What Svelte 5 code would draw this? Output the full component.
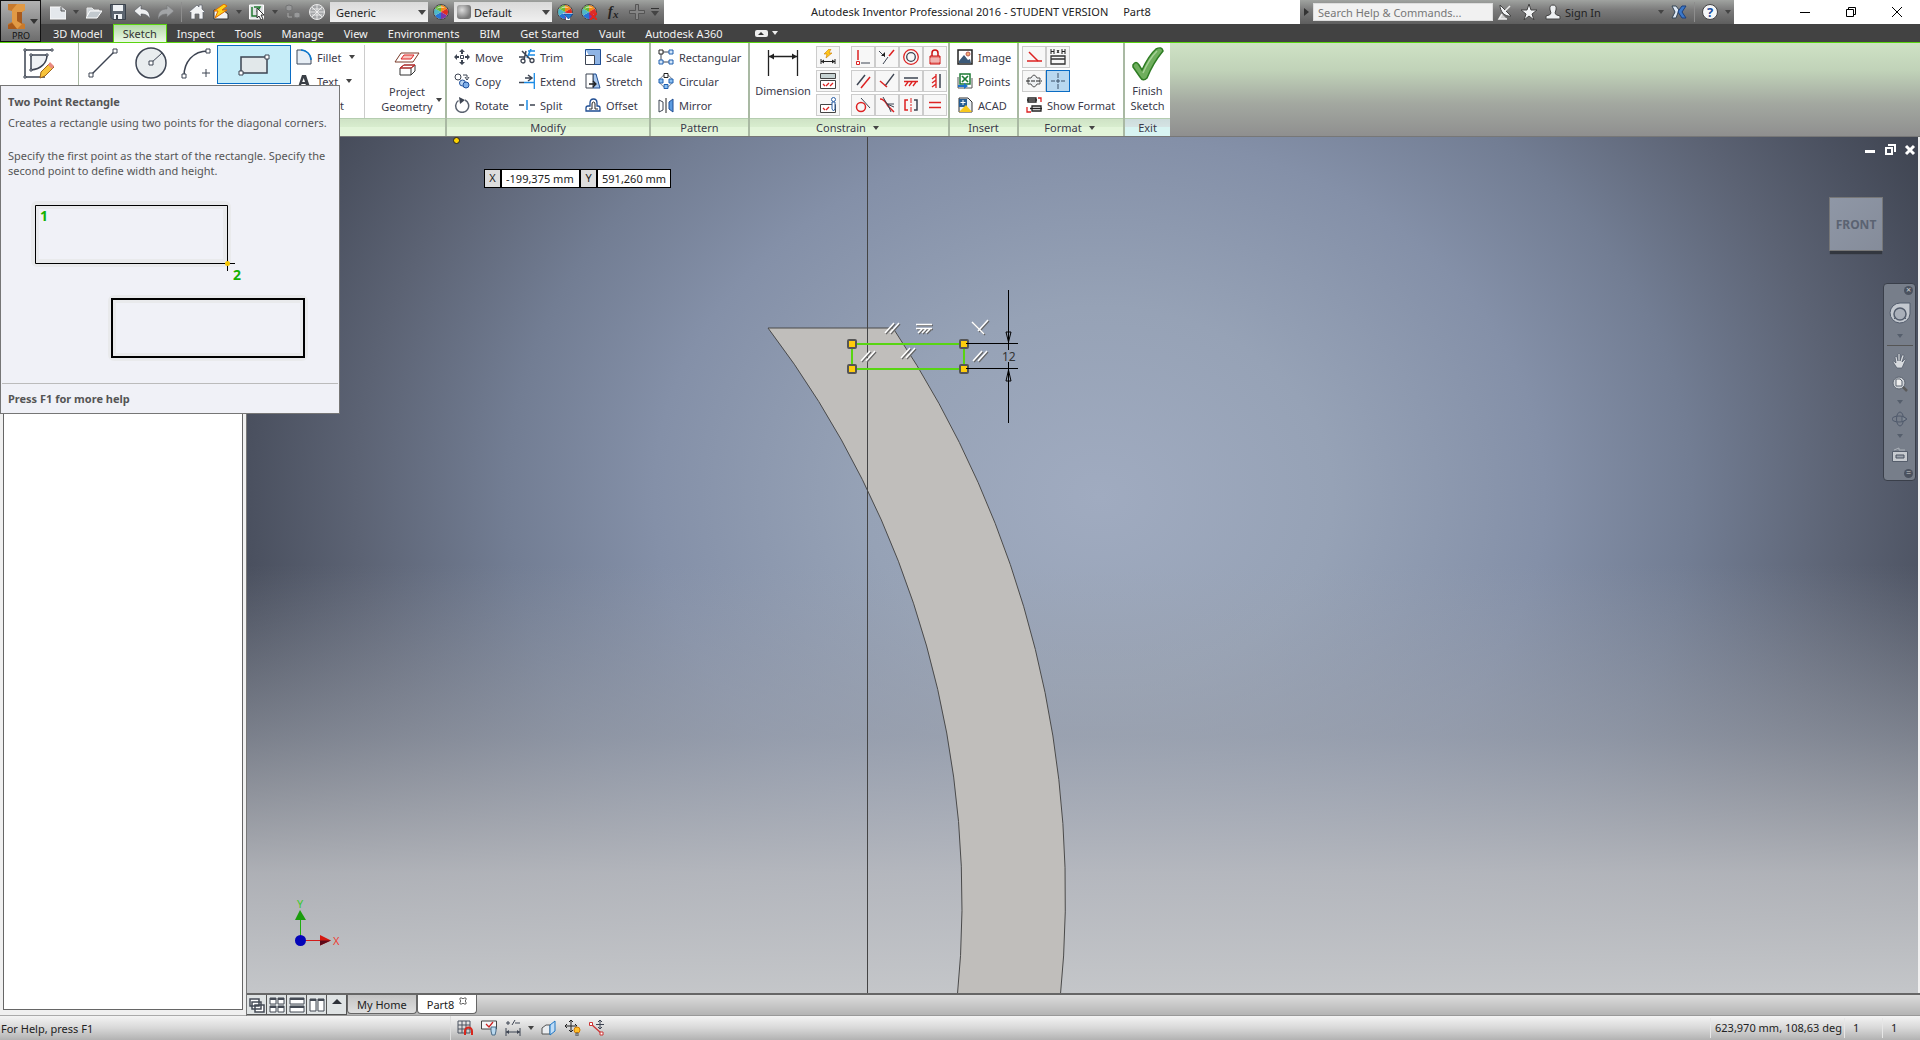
<script lang="ts">
	type Tool = { label: string; icon: string; menu?: boolean };

	// Inner SVG markup, all on a 16x16 view box
	const icons: Record<string, string> = {
		newFile: '<path d="M0 3h11l5 4v8H0z" fill="#e4e8ec" stroke="#fafafa"/><path d="M11 3v4h4" fill="#b9c0c6" stroke="#555"/>',
		open: '<path d="M1 12V4h5l2 2h5v2" fill="#d0d6da" stroke="#e8e8e8"/><path d="M0 14l4-7h12l-5 7z" fill="#c2c9ce" stroke="#fff"/>',
		save: '<path d="M0.500.500h15v15H3l-2-2z" fill="#5c6570" stroke="#39414b"/><path d="M3 1h10v6H3zM4 10h8v5H4z" fill="#eef1f4"/><path d="M6 11h2v4H6z" fill="#39414b"/>',
		undo: '<path d="M0 7l7-6v4c5 0 9 2 9 10-2-4-5-5-9-5v3z" fill="#eef0f2" stroke="#51565c" stroke-width=".6"/>',
		redo: '<path d="M16 7L9 1v4C4 5 0 7 0 15c2-4 5-5 9-5v3z" fill="#a2a4a6" stroke="#77797b" stroke-width=".6"/>',
		home: '<path d="M0 8l8-7 2 2V1h3v4l3 3-1 1-1-1v7h-4v-5H6v5H2V8L1 9z" fill="#f0f2f4" stroke="#5a6068" stroke-width=".7"/>',
		bolt: '<path d="M1 6h9l5 4v5H1z" fill="#f2f2f2" stroke="#333"/><path d="M11 0L1 7h4l-3 7 12-8H9l5-4z" fill="#ffd21a" stroke="#e06a00"/>',
		pick: '<path d="M0.500 1h14v14h-14z" fill="#dfe3e4" stroke="#fff"/><path d="M3 3v9h5M5 3h6l-3 5" fill="none" stroke="#237a31" stroke-width="1.500"/><path d="M8 4v10l2-2 2 4 2-1-2-4h3z" fill="#fff" stroke="#333"/>',
		cubes: '<g fill="#98999a" stroke="#737475"><path d="M1 2l3-1 3 1v4L4 7 1 6zM9 9l3-1 3 1v4l-3 1-3-1z"/><path d="M3 9v4h4" fill="none" stroke="#a8a8a8"/></g>',
		globe: '<circle cx="8" cy="8" r="7.500" fill="#a4a6a8" stroke="#eee"/><path d="M8 1v14M1 8h14M3 3l10 10M13 3L3 13M3 5h10M3 11h10" stroke="#f4f4f4" fill="none" stroke-width=".8"/>',
		wheel: '<circle cx="8" cy="8" r="7.500" fill="#eee"/><path d="M8 8V1a7 7 0 0 1 6 3.500z" fill="#f28a18"/><path d="M8 8l6-3.500a7 7 0 0 1 0 7z" fill="#e02c25"/><path d="M8 8l6 3.500A7 7 0 0 1 8 15z" fill="#7c36a8"/><path d="M8 8v7a7 7 0 0 1-6-3.500z" fill="#2774d6"/><path d="M8 8l-6 3.500a7 7 0 0 1 0-7z" fill="#4db8c8"/><path d="M8 8L2 4.500A7 7 0 0 1 8 1z" fill="#67b836"/><circle cx="8" cy="8" r="7.500" fill="none" stroke="#444"/><path d="M3 5q4-5 9-1-5-1-9 1z" fill="#fff" opacity=".6"/>',
		fx: '<text x="3" y="12" font-family="Liberation Serif, serif" font-style="italic" font-weight="bold" font-size="14" fill="#222">f</text><text x="8" y="14" font-family="Liberation Serif, serif" font-style="italic" font-weight="bold" font-size="11" fill="#222">x</text>',
		plus: '<path d="M6.500.500h3v6h6v3h-6v6h-3v-6h-6v-3h6z" fill="#858585" stroke="#555"/>',
		fillet: '<path d="M1 15V1h5c5 1 8 4 9 9v5z" fill="#e7eef5" stroke="#3a4658"/><path d="M5 1c5 0 10 4 10 10" fill="none" stroke="#0b78d0" stroke-width="1.500"/>',
		text: '<path d="M6 2h4l4 12h2v1H9v-1h1.500l-1-3h-4l-1 3H6v1H1v-1h1zM6.200 9h2.800L7.700 5z" fill="#3b3f46"/>',
		point: '<path d="M8 2v12M2 8h12" stroke="#3a4658"/>',
		move: '<path d="M8 0l3 3H9v2H7V3H5zM8 16l3-3H9v-2H7v2H5zM0 8l3-3v2h2v2H3v2zM16 8l-3-3v2h-2v2h2v2z" fill="#3d4452"/><path d="M6.500 6.500h3v3h-3z" fill="#fff" stroke="#3d4452"/>',
		copy: '<circle cx="4" cy="4" r="3" fill="#fff" stroke="#3d4452"/><circle cx="8.500" cy="10" r="3" fill="#b9d5f4" stroke="#1e4f9c"/><circle cx="12" cy="12" r="3" fill="#7fb0ea" stroke="#1e4f9c"/><path d="M9 2h4v3m-2-1l2 3 2-3" fill="none" stroke="#3d4452"/>',
		rotate: '<path d="M4.500 3.500A6.500 6.500 0 1 0 11 3" fill="none" stroke="#5a6270" stroke-width="1.500"/><path d="M5 0l6 3-5 4z" fill="#3d4452"/>',
		trim: '<path d="M9 2h7M9 6h7M12 0L8 9" stroke="#1a8be6" stroke-width="1.500"/><path d="M0 8h5M3 2l8 8M7 2L5 11" stroke="#3d4452" stroke-width="1.500"/><circle cx="4" cy="12" r="2" fill="none" stroke="#3d4452" stroke-width="1.300"/><circle cx="13" cy="11.500" r="2" fill="none" stroke="#3d4452" stroke-width="1.300"/>',
		extend: '<path d="M0 9.500h5M6 5h6M9 2l4 3-4 3" fill="none" stroke="#3d4452" stroke-width="1.500"/><path d="M5 9.500h10M15.300 0v16" stroke="#1a8be6" stroke-width="1.300"/>',
		split: '<path d="M0 8h5M11 8h5" stroke="#3d4452" stroke-width="1.500"/><path d="M8 3v10" stroke="#1a8be6" stroke-width="1.500"/>',
		scale: '<path d="M.500.500h15v15H9" fill="#8fb4e4" stroke="#1f4d92"/><path d="M.500 6.500h9v9h-9z" fill="#fff" stroke="#3d4452"/><path d="M.500.500v6M9 15.500h6.500" stroke="#1f4d92"/>',
		stretch: '<path d="M8 1h3l4 14H8z" fill="#a9c8ee" stroke="#1f4d92"/><path d="M1 1h7v14H1z" fill="#fff" stroke="#3d4452"/><path d="M4 11h6M8 8l3 3-3 3" fill="none" stroke="#222" stroke-width="1.300"/>',
		offset: '<path d="M1 14v-3q0-2 2-2h2V6q0-4 3.500-4T12 6v3h1q2 0 2 2v3z" fill="#fff" stroke="#1f4d92" stroke-width="1.300"/><path d="M4 12h3V7q0-2 1.500-2T10 7v5h3" fill="none" stroke="#222"/>',
		rectangular: '<path d="M3 3h10M3 3v10h10" fill="none" stroke="#3d4452"/><path d="M1 1h4v4H1z" fill="#fff" stroke="#222"/><path d="M11 1h4v4h-4zM1 11h4v4H1zM11 11h4v4h-4z" fill="#d4e7fb" stroke="#1f5fae"/>',
		circular: '<circle cx="8" cy="8" r="6" fill="none" stroke="#7b8490"/><path d="M6 .500h4v4H6z" fill="#fff" stroke="#222"/><path d="M1 6h4v4H1zM11 6h4v4h-4zM6 11.500h4v4H6z" fill="#8bc0f2" stroke="#1f5fae"/>',
		mirror: '<path d="M1 3l4 2v8l-4 2z" fill="#fff" stroke="#3d4452"/><path d="M8 1v15" stroke="#222"/><path d="M15 2l-4 3v7l4 3z" fill="#5c9be0" stroke="#1f4d92"/>',
		autoDim: '<path d="M9 0L4 5h3L6 9l6-5H9l2-4z" fill="#ffc71a" stroke="#c97a00" stroke-width=".6"/><path d="M1 10v5M15 10v5M1 12.500h14" stroke="#222"/><path d="M1 12.500l3-2v4zM15 12.500l-3-2v4z" fill="#222"/>',
		showCon: '<path d="M.500.500h15v5h-15z" fill="#c7d3d3" stroke="#444"/><path d="M.500 7.500h15v8h-15z" fill="#fff" stroke="#444"/><path d="M3 11l2 2M6 13l3-3M10 13l3-3" stroke="#d22" stroke-width="1.300"/>',
		conSet: '<path d="M.500 7.500h15v8h-15z" fill="#fff" stroke="#444"/><path d="M3 11l2 2M6 13l3-3" stroke="#d22" stroke-width="1.300"/><path d="M12 5h3v7l-1.500 2L12 12z" fill="#fff" stroke="#2a5ea5"/><circle cx="13.500" cy="2.500" r="2" fill="#fff" stroke="#2a5ea5"/>',
		coincident: '<path d="M3 1v10" stroke="#d22" stroke-width="1.500"/><path d="M1.500 12.500h3v3h-3z" fill="#fff" stroke="#d22"/><path d="M6 14h9" stroke="#3d4452"/>',
		collinear: '<path d="M15 1l-5 6" stroke="#d22" stroke-width="1.500"/><path d="M9 8l-5 7M0 2l6 6" stroke="#3d4452"/><path d="M2 7h4V3z" fill="#222"/>',
		concentric: '<circle cx="8" cy="8" r="7.300" fill="none" stroke="#d22" stroke-width="1.300"/><circle cx="8" cy="8" r="4.300" fill="none" stroke="#3d4452" stroke-width="1.300"/>',
		fix: '<path d="M3 7h10v8H3z" fill="#e98b86" stroke="#c11"/><path d="M5 7V4a3 3 0 0 1 6 0v3" fill="none" stroke="#c11" stroke-width="1.500"/><path d="M3 10h10M3 12h10" stroke="#fff" stroke-width=".7"/>',
		parallel: '<path d="M2 12L10 2" stroke="#3d4452" stroke-width="1.500"/><path d="M6 15L15 4" stroke="#d22" stroke-width="1.500"/>',
		perpendicular: '<path d="M15 1L6 13" stroke="#3d4452" stroke-width="1.300"/><path d="M1 8l7 6" stroke="#d22" stroke-width="1.500"/>',
		horizontal: '<path d="M1 5h14" stroke="#3d4452" stroke-width="1.500"/><path d="M1 8.500h14M5 9l-3 4M9 9l-3 4M13 9l-3 4" stroke="#d22" stroke-width="1.300"/>',
		vertical: '<path d="M13 1v14" stroke="#3d4452" stroke-width="1.500"/><path d="M9 1v14M9 3L5 6M9 7l-4 3M9 11l-4 3" stroke="#d22" stroke-width="1.300"/>',
		tangent: '<circle cx="6" cy="10" r="4.500" fill="none" stroke="#d22" stroke-width="1.500"/><path d="M6 1l9 10" stroke="#3d4452"/>',
		smooth: '<path d="M1 2c5 0 6 4 8 7l6 6" stroke="#d22" fill="none" stroke-width="1.500"/><path d="M4 0l4 7h7M8 7l7 3M9 8l3 7" stroke="#3d4452" fill="none"/>',
		symmetric: '<path d="M5 3H2v10h3" fill="none" stroke="#d22" stroke-width="1.500"/><path d="M11 3h3v10h-3" fill="none" stroke="#3d4452" stroke-width="1.500"/><path d="M8 1v5M8 10v5M8 7v2" stroke="#d22"/>',
		equal: '<path d="M2 5.500h12M2 10.500h12" stroke="#d22" stroke-width="1.300"/>',
		image: '<path d="M1 1h14v14H1z" fill="#fff" stroke="#222" stroke-width="1.500"/><path d="M2 12l5-6 4 5 2-1 1 4H2z" fill="#3b5978"/><circle cx="11" cy="5" r="2" fill="#f1b070" stroke="#b55"/>',
		points: '<path d="M3 1h10v10H3z" fill="#fff" stroke="#1c7a35" stroke-width="1.500"/><path d="M5 3l6 6M11 3L5 9" stroke="#1c7a35" stroke-width="1.700"/><path d="M1 4v11h14V5" fill="none" stroke="#555"/><path d="M1 12h6v-2l4 3-4 3v-2H1z" fill="#1f73cc"/>',
		acad: '<path d="M2 1h9l4 4v10H2z" fill="#e9eff5" stroke="#333"/><path d="M2 2h8v8H2z" fill="#255d95"/><path d="M2 15l7-7 6 7z" fill="#f7c81d"/><path d="M6 3v5M3.500 5.500h5" stroke="#fff"/>',
		construction: '<path d="M3 3l9 9" stroke="#d22" stroke-width="1.500"/><path d="M1 12h15" stroke="#d22" stroke-width="1.500"/>',
		driven: '<path d="M1 0v5M1 2.500h3M4 0v5M7 1l2 3M9 1L7 4M12 0v5M12 2.500h3M15 0v5" stroke="#222" fill="none"/><path d="M1 15V7h14v8zM1 10h14" fill="none" stroke="#333" stroke-width="1.300"/>',
		centerline: '<path d="M2 5h3q3-6 6 0h3v6h-3q-3 6-6 0H2z" fill="#eef0f2" stroke="#555"/><path d="M0 8h16" stroke="#222" stroke-dasharray="4 1"/>',
		centerpoint: '<path d="M8 0v5M8 6v4M8 11v5M1 8h4M6 8h4M11 8h4" stroke="#3b5068"/>',
		format: '<path d="M2 1h8v4H2zM6 9h9v5H6zM1 3h10M4 11.500h12" fill="#fff" stroke="#222" stroke-width="1.300"/><path d="M12 1h3v4M1 10v5h4" stroke="#d22" fill="none" stroke-width="1.300"/>',
		dish: '<path d="M3 1l11 11C8 13 3 8 3 1z" fill="#f1f3f5" stroke="#444"/><path d="M8 7l5-5M5 10l-3 5h8" stroke="#eee" stroke-width="1.500" fill="#ccc"/>',
		star: '<path d="M8 0l2 6h6l-5 4 2 6-5-4-5 4 2-6-5-4h6z" fill="#f2f4f5" stroke="#444"/>',
		person: '<path d="M8 1q4 0 3 5l-1 3q0 2 5 3v3H1v-3q5-1 5-3L5 6q-1-5 3-5z" fill="#eceff1" stroke="#444"/>',
		exchange: '<path d="M1 2h4l3 4-3 8H1l3-6z" fill="#dfe9f5" stroke="#345"/><path d="M15 2h-4L8 6l-1 2 4 6h4l-4-6z" fill="#3b78c9" stroke="#1c3f7c"/>',
		help: '<circle cx="8" cy="8" r="7.500" fill="#f5f7f9" stroke="#444"/><text x="5" y="13" font-family="Noto Sans, sans-serif" font-weight="bold" font-size="13" fill="#1d4e9e">?</text>',
		magnetGrid: '<path d="M1 1h12v12H1zM5 1v12M9 1v12M1 5h12M1 9h12" fill="none" stroke="#4b5360"/><path d="M8 15v-4a3.500 3.500 0 0 1 7 0v4" fill="none" stroke="#d9261c" stroke-width="2"/>',
		conLamp: '<path d="M.500 1h15v8h-15z" fill="#f4f6f8" stroke="#444"/><path d="M5 4l3 3 4-5" fill="none" stroke="#c22" stroke-width="1.300"/><path d="M10 7h5v4l-1 4h-3l-1-4z" fill="#b9d8ef" stroke="#4a6c88"/>',
		tolerance: '<path d="M1 8v8M15 8v8M1 12h14M1 3h4M3 1v4M7 5l3-5M10 3h5" stroke="#3d4452"/><path d="M1 12l3-2v4zM15 12l-3-2v4z" fill="#3d4452"/>',
		slice: '<path d="M1 8l4-3h4v9H1z" fill="#eaedf0" stroke="#555"/><path d="M9 5l5-4v10l-5 4z" fill="#bfdcf6" stroke="#1d76c4"/>',
		dofLamp: '<path d="M6 0v11M0 6h12M4 2l2-2 2 2M4 10l2 2 2-2M2 4L0 6l2 2M10 4l2 2" fill="none" stroke="#222"/><circle cx="12" cy="10" r="3" fill="#ffc02a" stroke="#d27a00"/><path d="M11 13h2v3h-2z" fill="#ccc" stroke="#555"/>',
		relax: '<path d="M2 4l10 9" stroke="#c33" stroke-width="1.300"/><path d="M.500 2.500h3v3h-3zM11 12h3v3h-3z" fill="#fff" stroke="#c33"/><path d="M11 0v9M7 4.500h8M9 2l2-2 2 2M9 7l2 2 2-2" stroke="#3d4452" fill="none"/>',
		cascade: '<g fill="#fff" stroke="#454b55" stroke-width="1.500"><path d="M1 2h9v7H1zM3 5h9v7H3zM6 8h9v7H6z"/></g>',
		tile: '<g fill="#fff" stroke="#454b55"><path d="M1 1h6v6H1zM9 1h6v6H9zM1 9h6v6H1zM9 9h6v6H9z"/><path d="M1 2h6M9 2h6M1 10h6M9 10h6" stroke-width="2"/></g>',
		rows: '<g fill="#fff" stroke="#454b55"><path d="M1 1h14v6H1zM1 9h14v6H1z"/><path d="M1 2h14M1 10h14" stroke-width="2"/></g>',
		columns: '<g fill="#fff" stroke="#454b55"><path d="M1 2h6v12H1zM9 2h6v12H9z"/><path d="M1 3h6M9 3h6" stroke-width="2"/></g>',
		up: '<path d="M8 2l5 5H3z" fill="#2d3138"/>',
		zoomPage: '<circle cx="7" cy="7" r="6" fill="#cfd3d8" stroke="#5c6470"/><path d="M4 3h4l2 2v5H4z" fill="#eee" stroke="#5c6470"/><path d="M11 11l4 4" stroke="#5b5b5b" stroke-width="2.500"/>',
		hand: '<path d="M5 15L1 9q0-2 2 0l1 1-1-6q1-2 2 0l1 4V1q1-2 2 0v7l2-6q2-1 2 1l-2 6 3-3q2 0 0 2l-3 7z" fill="#d7dade" stroke="#4e5664" stroke-width=".7"/>',
		orbit: '<ellipse cx="7" cy="8" rx="7" ry="3" fill="none" stroke="#505a6c"/><ellipse cx="8" cy="8" rx="3.500" ry="7" fill="none" stroke="#505a6c"/><path d="M10 5l5 3-5 3z" fill="#7f8893" stroke="#505a6c"/>',
		lookAt: '<path d="M.500 5.500h15v10h-15z" fill="#c7cbd0" stroke="#555d6b"/><path d="M4 9h8v3H4z" fill="#9ca3ad" stroke="#4a5261"/><path d="M2 4l5-2v2h6" fill="none" stroke="#adb2b9"/>'
	};
	icons.wheelAdjust = icons.wheel + '<path d="M6 9h10l-3 4v3h-4v-3z" fill="#fff"/><path d="M7 10h9l-4.500 5z" fill="#1b78d8" stroke="#0a3f86" stroke-width=".7"/>';
	icons.wheelClear = icons.wheel + '<path d="M9 9l7 7M16 9l-7 7" stroke="#e3261b" stroke-width="2"/>';

	const tabs = ['3D Model', 'Sketch', 'Inspect', 'Tools', 'Manage', 'View', 'Environments', 'BIM', 'Get Started', 'Vault', 'Autodesk A360'];
	let activeTab = $state('Sketch');

	const modify: Tool[] = [
		{ label: 'Move', icon: 'move' },
		{ label: 'Trim', icon: 'trim' },
		{ label: 'Scale', icon: 'scale' },
		{ label: 'Copy', icon: 'copy' },
		{ label: 'Extend', icon: 'extend' },
		{ label: 'Stretch', icon: 'stretch' },
		{ label: 'Rotate', icon: 'rotate' },
		{ label: 'Split', icon: 'split' },
		{ label: 'Offset', icon: 'offset' }
	];
	const pattern: Tool[] = [
		{ label: 'Rectangular', icon: 'rectangular' },
		{ label: 'Circular', icon: 'circular' },
		{ label: 'Mirror', icon: 'mirror' }
	];
	const insert: Tool[] = [
		{ label: 'Image', icon: 'image' },
		{ label: 'Points', icon: 'points' },
		{ label: 'ACAD', icon: 'acad' }
	];
	const create: Tool[] = [
		{ label: 'Fillet', icon: 'fillet', menu: true },
		{ label: 'Text', icon: 'text', menu: true },
		{ label: 'Point', icon: 'point' }
	];
	const dimTools = ['autoDim', 'showCon', 'conSet'];
	const constraints = [
		'coincident', 'collinear', 'concentric', 'fix',
		'parallel', 'perpendicular', 'horizontal', 'vertical',
		'tangent', 'smooth', 'symmetric', 'equal'
	];
	const formats = ['construction', 'driven', 'centerline', 'centerpoint'];
	const arrangers = ['cascade', 'tile', 'rows', 'columns', 'up'];

	let material = $state('Generic');
	let appearance = $state('Default');
	let search = $state('');
	let xValue = $state('-199,375 mm');
	let yValue = $state('591,260 mm');

	const grips = [[852, 344], [964, 344], [852, 369], [964, 369]];
	const parallelMarks = [[892, 328], [868, 356], [908, 353], [980, 356]];
</script>

{#snippet icon(name: string, size = 16)}
	<svg class="icon" width={size} height={size} viewBox="0 0 16 16" aria-hidden="true">{@html icons[name]}</svg>
{/snippet}

{#snippet quick(name: string)}
	<button class="quick" aria-label={name}>{@render icon(name)}</button>
{/snippet}

{#snippet arrow()}
	<span class="arrow"></span>
{/snippet}

{#snippet tool(t: Tool)}
	<button class="tool">
		{@render icon(t.icon)}
		<span>{t.label}</span>
		{#if t.menu}{@render arrow()}{/if}
	</button>
{/snippet}

{#snippet square(name: string, on = false)}
	<button class="square" class:on aria-label={name}>{@render icon(name)}</button>
{/snippet}

<div class="app">
	<header>
		<button class="app-button" aria-label="Application menu">
			<svg width="39" height="40" viewBox="0 0 39 40">
				<path d="M7 3h17v6l-3 2v11l3 1v5H7v-5l4-2V10L7 9z" fill="#c87a2c" />
				<path d="M11 9l5-6h8v6l-3 2v12l-5 5-5-7z" fill="#e19a45" />
				<path d="M16 11h5v12l-5-3zM7 24l4-2 5 6H7z" fill="#a85a1c" />
				<path d="M29 18h8l-4 5z" fill="#333" />
				<text x="11" y="38" font-size="9" fill="#111">PRO</text>
			</svg>
		</button>
		<div class="title-row">
			<div class="quick-bar">
				{@render quick('newFile')}{@render arrow()}
				{@render quick('open')}{@render quick('save')}{@render quick('undo')}{@render quick('redo')}
				<i class="sep"></i>
				{@render quick('home')}{@render quick('bolt')}{@render arrow()}
				{@render quick('pick')}{@render arrow()}
				{@render quick('cubes')}{@render quick('globe')}
				<span class="combo">
					<select aria-label="Material" bind:value={material}><option>Generic</option></select>
				</span>
				{@render quick('wheel')}
				<span class="combo ball">
					<select aria-label="Appearance" bind:value={appearance}><option>Default</option></select>
				</span>
				{@render quick('wheelAdjust')}{@render quick('wheelClear')}{@render quick('fx')}{@render quick('plus')}
				<span class="arrow more-tools"></span>
			</div>
			<div class="title">Autodesk Inventor Professional 2016 - STUDENT VERSION <span>Part8</span></div>
			<div class="info-bar">
				<span class="expand"></span>
				<input aria-label="Search Help" placeholder="Search Help & Commands..." bind:value={search} />
				{@render quick('dish')}{@render quick('star')}
				<button class="sign-in">{@render icon('person')}<span>Sign In</span>{@render arrow()}</button>
				{@render quick('exchange')}
				<i class="sep"></i>
				{@render quick('help')}{@render arrow()}
			</div>
			<div class="window-buttons">
				<button aria-label="Minimize"><svg width="12" height="12"><path d="M1 6.500h10" /></svg></button>
				<button aria-label="Restore"><svg width="12" height="12"><path d="M1.500 3.500h7v7h-7zM3.500 3V1.500h7v7H9" /></svg></button>
				<button aria-label="Close"><svg width="12" height="12"><path d="M1 1l10 10M11 1L1 11" /></svg></button>
			</div>
		</div>
		<nav class="tabs">
			{#each tabs as tab}
				<button class:active={tab === activeTab} onclick={() => (activeTab = tab)}>{tab}</button>
			{/each}
			<span class="pill"><i></i></span>
			<span class="arrow light"></span>
		</nav>
	</header>

	<div class="ribbon">
		<section class="panel start">
			<div class="body">
				<button class="big" aria-label="Start 2D Sketch">
					<svg width="32" height="34" viewBox="0 0 32 34" fill="none" stroke="#3d4452" stroke-width="1.500">
						<path d="M2 3v27M2 3h27M2 30h20" />
						<path d="M8 8h16c0 8-6 14-16 15z" fill="#eef1f4" />
						<path d="M17 31l1-6 9-9 4 4-9 9z" fill="#f7c33b" stroke="#a0651a" stroke-width="1" />
						<path d="M25 18l2-3 4 4-2 3z" fill="#e98a80" stroke="none" />
						<path d="M1 2h2v2H1zM28 2h2v2h-2zM1 29h2v2H1zM7 7h2v2H7zM7 22h2v2H7zM23 7h2v2h-2z" fill="#fff" stroke-width="1" />
					</svg>
				</button>
			</div>
			<div class="caption"></div>
		</section>

		<section class="panel create">
			<div class="body">
				<div class="curves">
					<button class="big" aria-label="Line">
						<svg width="30" height="34" viewBox="0 0 30 34" fill="#fff" stroke="#3d4452">
							<path d="M3 28L27 4" stroke-width="1.500" /><path d="M1 26h4v4H1zM25 2h4v4h-4z" />
						</svg>
					</button>
					<button class="big" aria-label="Circle">
						<svg width="32" height="34" viewBox="0 0 32 34" fill="#e9edef" stroke="#3d4452">
							<circle cx="16" cy="16" r="15" stroke-width="1.500" /><path d="M16 16L27 6" /><path d="M14 14h4v4h-4z" fill="#fff" />
						</svg>
					</button>
					<button class="big" aria-label="Arc">
						<svg width="30" height="34" viewBox="0 0 30 34" fill="#fff" stroke="#3d4452">
							<path d="M3 29C3 15 12 4 27 4" fill="none" stroke-width="1.500" /><path d="M1 27h4v4H1zM25 2h4v4h-4zM25 22v8M21 26h8" />
						</svg>
					</button>
				</div>
				<button class="rect-tool" aria-label="Rectangle">
					<svg width="32" height="24" viewBox="0 0 32 24" fill="#e2e8ea" stroke="#3d4452">
						<path d="M3 4h26v16H3z" stroke-width="1.500" /><path d="M1 18h4v4H1zM27 2h4v4h-4z" fill="#fff" />
					</svg>
				</button>
				<div class="stack">{#each create as t}{@render tool(t)}{/each}</div>
				<i class="divider"></i>
				<button class="big project">
					<svg width="26" height="26" viewBox="0 0 26 26" fill="none" stroke="#333">
						<path d="M7 2h18l-6 9H1z" stroke="#7a3a2a" fill="#fff" /><path d="M10 4h10l-3 4H7z" stroke="#d22" fill="#f7c4bf" />
						<path d="M6 17l4-3h11v6l-4 4H6zM6 17h11v7M17 17l4-3" fill="#fff" /><path d="M6 17l4-3h11l-4 3z" stroke="#d22" />
					</svg>
					<span>Project<br />Geometry</span>
					{@render arrow()}
				</button>
			</div>
			<div class="caption"></div>
		</section>

		<section class="panel modify">
			<div class="body grid">{#each modify as t}{@render tool(t)}{/each}</div>
			<div class="caption">Modify</div>
		</section>

		<section class="panel pattern">
			<div class="body"><div class="stack">{#each pattern as t}{@render tool(t)}{/each}</div></div>
			<div class="caption">Pattern</div>
		</section>

		<section class="panel constrain">
			<div class="body">
				<button class="big dimension">
					<svg width="32" height="32" viewBox="0 0 32 32" stroke="#222" fill="#222">
						<path d="M1.500 3v26M30.500 3v26M2 9.500h28" stroke-width="1.300" /><path d="M2 9.500l5-3v6zM30 9.500l-5-3v6z" stroke="none" />
					</svg>
					<span>Dimension</span>
				</button>
				<div class="stack">{#each dimTools as c}{@render square(c)}{/each}</div>
				<div class="squares">{#each constraints as c}{@render square(c)}{/each}</div>
			</div>
			<div class="caption">Constrain {@render arrow()}</div>
		</section>

		<section class="panel insert">
			<div class="body"><div class="stack">{#each insert as t}{@render tool(t)}{/each}</div></div>
			<div class="caption">Insert</div>
		</section>

		<section class="panel format">
			<div class="body">
				<div class="stack">
					<div class="pairs">{#each formats as f}{@render square(f, f === 'centerpoint')}{/each}</div>
					{@render tool({ label: 'Show Format', icon: 'format' })}
				</div>
			</div>
			<div class="caption">Format {@render arrow()}</div>
		</section>

		<section class="panel exit">
			<div class="body">
				<button class="big finish">
					<svg width="34" height="34" viewBox="0 0 34 34">
						<path d="M2 18q3-5 6 0l3 5Q18 8 25 2q6-3 7 2Q22 16 16 31q-4 4-7-1L2 20z" fill="#6fae5d" stroke="#2f7d24" stroke-width="1.500" />
						<path d="M26 4Q18 12 12 26" stroke="#a6d196" stroke-width="1.500" fill="none" />
					</svg>
					<span>Finish<br />Sketch</span>
				</button>
			</div>
			<div class="caption">Exit</div>
		</section>
	</div>

	<main>
		<aside><div class="browser"></div></aside>
		<div class="workspace">
			<div class="canvas">
				<svg class="sketch" width="100%" height="100%">
					<g transform="translate(-247 -137)">
						<path d="M768 328H893A1019 1019 0 0 1 1060 1000H957A948 948 0 0 0 768 328z" fill="#c0bebb" stroke="#4a4a4a" />
						<path d="M867.500 137V1000" stroke="#444" />
						<circle cx="456.500" cy="140.500" r="3" fill="#ffd400" stroke="#222" />
						<path d="M852 344h112v25H852z" fill="none" stroke="#58d512" stroke-width="2" />
						{#each grips as [x, y]}
							<rect x={x - 4} y={y - 4} width="8" height="8" rx="1" fill="#ffcc0d" stroke="#555" stroke-width="2" />
						{/each}
						<path d="M966 343.500h52M966 368.500h52M1008.500 290v53M1008.500 368v55M1008.500 344v6M1008.500 362v6" stroke="#000" />
						<path d="M1006 332h5l-2.500 10zM1006 381h5l-2.500-11z" fill="none" stroke="#000" />
						<text x="1002" y="361" font-size="12" fill="#333">12</text>
						<g class="marks" stroke-width="1.500">
							{#each parallelMarks as [x, y]}
								<path d={`M${x - 7} ${y + 5}l9-10M${x - 2} ${y + 5}l9-10`} />
							{/each}
							<path d="M916 324.500h16M916 328.500h16M922 329l-4 4M926 329l-4 4M930 329l-4 4" />
							<path d="M972 322l12 12M988 320l-10 11" />
						</g>
						<path d="M300.500 940V916" stroke="#1fae10" />
						<path d="M300 910l6 10h-11z" fill="#1b9c0d" />
						<path d="M300 940.500h22" stroke="#d21a1a" />
						<path d="M320 935l11 5.500-11 5z" fill="#d5180f" />
						<path d="M320 940.500h11l-11 5z" fill="#5c0a1a" />
						<circle cx="300.500" cy="940.500" r="5.500" fill="#0404b8" />
						<text x="297" y="908" font-size="11" fill="#3fc92c">Y</text>
						<text x="333" y="945" font-size="11" fill="#ee3d33">X</text>
					</g>
				</svg>

				<div class="hud">
					<label for="hud-x">X</label><input id="hud-x" bind:value={xValue} />
					<label for="hud-y">Y</label><input id="hud-y" class="short" bind:value={yValue} />
				</div>

				<div class="mdi">
					<button aria-label="Minimize document"><svg width="14" height="14"><path d="M2 8.500h10" stroke-width="3" /></svg></button>
					<button aria-label="Restore document"><svg width="14" height="14"><path d="M3 5h6v6H3zM5 2h7v7" stroke-width="2" /></svg></button>
					<button aria-label="Close document"><svg width="14" height="14"><path d="M3 3l8 8M11 3l-8 8" stroke-width="3" /></svg></button>
				</div>

				<button class="view-cube">FRONT</button>

				<div class="nav-bar">
					<span class="dot">×</span>
					<button aria-label="Steering wheel">
						<svg width="24" height="24" viewBox="0 0 24 24" fill="#c3c8cf" stroke="#535c6c">
							<path d="M12 1h10v11A10 10 0 1 1 12 1z" /><circle cx="12" cy="12" r="6" fill="#a9afb9" stroke-width="1.500" /><path d="M6 17l2-2M18 17l-2-2" />
						</svg>
					</button>
					<span class="arrow dim"></span>
					<hr />
					<button aria-label="Pan">{@render icon('hand')}</button>
					<button aria-label="Zoom">{@render icon('zoomPage')}</button>
					<span class="arrow dim"></span>
					<button aria-label="Orbit">{@render icon('orbit')}</button>
					<span class="arrow dim"></span>
					<button aria-label="Look at">{@render icon('lookAt')}</button>
					<span class="dot">=</span>
				</div>
			</div>

			<div class="doc-tabs">
				{#each arrangers as a}
					<button class="arrange" aria-label={a}>{@render icon(a)}</button>
				{/each}
				<button class="doc">My Home</button>
				<button class="doc current">Part8 <svg width="8" height="8" viewBox="0 0 8 8"><path d="M1 1h2l1 1 1-1h2v2L6 4l1 1v2H5L4 6 3 7H1V5l1-1-1-1z" fill="#fff" stroke="#666" /></svg></button>
			</div>
		</div>
	</main>

	<footer>
		<span class="hint">For Help, press F1</span>
		<div class="status-tools">
			{@render quick('magnetGrid')}{@render quick('conLamp')}{@render quick('tolerance')}{@render arrow()}{@render quick('slice')}{@render quick('dofLamp')}{@render quick('relax')}
		</div>
		<span class="cell coords">623,970 mm, 108,63 deg</span>
		<span class="cell">1</span>
		<span class="cell">1</span>
	</footer>

	<div class="tooltip" role="tooltip">
		<div class="text">
			<strong>Two Point Rectangle</strong>
			<p>Creates a rectangle using two points for the diagonal corners.</p>
			<p>Specify the first point as the start of the rectangle. Specify the second point to define width and height.</p>
		</div>
		<svg width="338" height="190" viewBox="0 0 338 190" fill="none">
			<g stroke="#e9eaec" stroke-width="8">
				<rect x="34" y="12" width="192" height="58" rx="2" /><rect x="111" y="106" width="192" height="58" rx="2" />
			</g>
			<path d="M34.500 12.500h192v58h-192zM226.500 64v14M218 70.500h16" stroke="#000" />
			<rect x="111" y="106" width="192" height="58" stroke="#000" stroke-width="2" />
			<circle cx="226.500" cy="70.500" r="2.500" fill="#f5c400" />
			<text x="39" y="28">1</text>
			<text x="232" y="87">2</text>
		</svg>
		<div class="more">Press F1 for more help</div>
	</div>
</div>

<style>
	:global(body) {
		margin: 0;
	}

	.app {
		position: relative;
		display: flex;
		flex-direction: column;
		min-height: 100vh;
		font-family: 'Noto Sans', sans-serif;
		font-size: 11px;
		line-height: 15px;
		color: #222;
		background: #f0f0f0;
	}

	button {
		display: flex;
		align-items: center;
		justify-content: center;
		margin: 0;
		padding: 0;
		border: 0;
		background: none;
		font: inherit;
		color: inherit;
		white-space: nowrap;
	}

	input,
	select {
		box-sizing: border-box;
		margin: 0;
		font: inherit;
		color: inherit;
	}

	svg {
		display: block;
		flex: none;
	}

	.arrow {
		display: flex;
		flex: none;
		justify-content: center;
		width: 12px;
	}

	.arrow::before {
		content: '';
		border: 3px solid transparent;
		border-top: 4px solid #444;
		border-bottom: 0;
	}

	.arrow.light::before {
		border-top-color: #eee;
	}

	.arrow.dim::before {
		border-top-color: #555e6c;
	}

	.arrow.more-tools {
		flex-direction: column;
		align-items: center;
		gap: 2px;
	}

	.arrow.more-tools::before {
		order: 1;
		border-width: 5px 4px 0;
	}

	.arrow.more-tools::after {
		content: '';
		width: 8px;
		height: 1px;
		background: #333;
	}

	.sep {
		width: 1px;
		height: 20px;
		margin: 0 3px;
		background: #8d8d8d;
	}

	/* title and tabs */
	header {
		display: grid;
		grid-template-columns: 41px 1fr;
		grid-template-rows: 24px 18px;
		background: #424242;
		border-bottom: 1px solid #5ad310;
	}

	.app-button {
		grid-row: 1 / 3;
		border: 1px solid #111;
		background: linear-gradient(#b2b2b2, #6d6d6d);
	}

	.title-row {
		display: flex;
		background: #fff;
	}

	.quick-bar,
	.info-bar {
		display: flex;
		align-items: center;
		background: linear-gradient(#a0a3a0, #7c7c7c 40%, #5e5e5e);
	}

	.quick-bar {
		width: 618px;
		padding-left: 5px;
	}

	.quick {
		width: 24px;
		height: 24px;
		flex: none;
	}

	.combo {
		position: relative;
		width: 98px;
		height: 20px;
		margin: 0 1px;
	}

	.combo select {
		width: 100%;
		height: 20px;
		padding: 0 6px;
		border: 0;
		border-radius: 0;
		appearance: none;
		background: linear-gradient(#d9d9d9, #f0f0f0);
	}

	.combo::after {
		content: '';
		position: absolute;
		top: 8px;
		right: 2px;
		border: 4px solid transparent;
		border-top: 5px solid #444;
		border-bottom: 0;
		pointer-events: none;
	}

	.ball select {
		padding-left: 20px;
	}

	.ball::before {
		content: '';
		position: absolute;
		top: 3px;
		left: 3px;
		width: 14px;
		height: 14px;
		border-radius: 3px;
		background: radial-gradient(circle at 5px 5px, #ddd, #777 70%);
		pointer-events: none;
	}

	.title {
		flex: 1;
		padding-left: 147px;
		line-height: 24px;
		white-space: nowrap;
	}

	.title span {
		padding-left: 12px;
	}

	.info-bar {
		width: 434px;
	}

	.expand {
		margin: 0 4px;
		border: 4px solid transparent;
		border-left: 5px solid #333;
		border-right: 0;
	}

	.info-bar input {
		width: 180px;
		height: 18px;
		padding: 0 4px;
		border: 1px solid #ddd;
		background: #f1f1f1;
	}

	.info-bar input::placeholder {
		color: #777;
	}

	.sign-in {
		flex: 1;
		gap: 4px;
		padding-left: 4px;
	}

	.sign-in .arrow {
		margin-left: auto;
	}

	.window-buttons {
		display: flex;
		padding-left: 48px;
	}

	.window-buttons button {
		width: 46px;
	}

	.window-buttons path {
		fill: none;
		stroke: #000;
	}

	.tabs {
		display: flex;
		align-items: center;
		color: #f2f2f2;
	}

	.tabs button {
		height: 18px;
		padding: 0 10px;
	}

	.tabs button:first-child {
		padding-left: 12px;
	}

	.tabs .active {
		padding: 0 9px;
		border: 1px solid #5ad310;
		border-bottom: 0;
		box-sizing: border-box;
		color: #333;
		background: linear-gradient(#b4d9a8, #edf8e8);
	}

	.pill {
		display: flex;
		justify-content: center;
		align-items: center;
		width: 13px;
		height: 7px;
		margin: 0 1px 0 22px;
		border-radius: 2px;
		background: #eee;
	}

	.pill i {
		border: 3px solid transparent;
		border-top: 0;
		border-bottom: 3px solid #333;
	}

	/* ribbon */
	.ribbon {
		display: flex;
		height: 93px;
		border-bottom: 1px solid #777;
		background: linear-gradient(#cfe2c5, #c0d2b8 30%, #a3a8a0 65%, #8f8f8f);
	}

	.panel {
		display: flex;
		flex-direction: column;
		flex: none;
		box-sizing: border-box;
		border-right: 2px solid #a9b9a3;
		background: #fff;
		color: #3a3a4a;
	}

	.body {
		display: flex;
		height: 73px;
		padding-top: 2px;
	}

	.caption {
		display: flex;
		align-items: center;
		justify-content: center;
		gap: 4px;
		height: 17px;
		border-top: 1px solid #b5cdb0;
		background: linear-gradient(#cfe3c6, #d9eecf 50%, #e3f5da 50%);
	}

	.start {
		width: 79px;
		border-right-width: 1px;
	}

	.create {
		width: 368px;
	}

	.modify {
		width: 204px;
	}

	.pattern {
		width: 99px;
	}

	.constrain {
		width: 200px;
	}

	.insert {
		width: 69px;
	}

	.format {
		width: 106px;
	}

	.exit {
		width: 45px;
		border-right: 0;
	}

	.exit .caption {
		background: linear-gradient(#ccdcdc, #d6e4e4 50%, #d8f4f2 50%);
	}

	.big {
		position: relative;
		flex-direction: column;
		justify-content: flex-start;
		padding-top: 2px;
	}

	.start .big {
		width: 78px;
	}

	.curves {
		display: grid;
		grid-template-columns: 48px 48px 42px;
	}

	.rect-tool {
		box-sizing: border-box;
		width: 74px;
		height: 39px;
		border: 1px solid #0a6cc4;
		background: #c6edf8;
	}

	.stack {
		display: flex;
		flex-direction: column;
	}

	.tool {
		justify-content: flex-start;
		gap: 5px;
		height: 24px;
		padding-left: 7px;
	}

	.create .tool {
		padding-left: 5px;
	}

	.create .stack {
		width: 73px;
	}

	.divider {
		width: 1px;
		background: #ccc;
	}

	.grid {
		display: grid;
		grid-template-columns: 65px 66px 1fr;
		grid-auto-rows: 24px;
	}

	.project {
		flex: 1;
		padding: 6px 0 0 4px;
		gap: 7px;
	}

	.project .arrow {
		position: absolute;
		right: 0;
		bottom: 16px;
	}

	.dimension {
		width: 66px;
		gap: 4px;
	}

	.finish {
		width: 45px;
		gap: 2px;
	}

	.square {
		box-sizing: border-box;
		width: 24px;
		height: 22px;
		margin: 1px 0;
		border: 1px solid #ccc;
		background: #f7f7f7;
	}

	.square.on {
		border-color: #0a6cc4;
		background: #b8d8f0;
	}

	.squares {
		display: grid;
		grid-template-columns: repeat(4, 24px);
		grid-auto-rows: 24px;
		margin-left: 11px;
	}

	.pairs {
		display: grid;
		grid-template-columns: 24px 24px;
		padding-left: 3px;
	}

	/* work area */
	main {
		display: flex;
		flex: 1;
	}

	aside {
		display: flex;
		width: 246px;
		box-sizing: border-box;
		padding: 0 3px 5px;
		border-bottom: 1px solid #aaa;
	}

	.browser {
		flex: 1;
		border: 1px solid #666;
		background: #fff;
	}

	.workspace {
		display: flex;
		flex: 1;
		flex-direction: column;
		padding-right: 2px;
		border-left: 1px solid #777;
	}

	.canvas {
		position: relative;
		flex: 1;
		overflow: hidden;
		background:
			linear-gradient(transparent 50%, rgba(160, 165, 175, 0.6) 70%, rgba(186, 188, 193, 0.9) 86%, #c4c6c9),
			radial-gradient(ellipse 1060px 860px at 51% 42%, #a0abc0, #96a2b6 22%, #8490a8 42%, #727d93 56%, #5c6374 70%, #4b5160 80%, #3b404c 90%);
	}

	.sketch {
		position: absolute;
		inset: 0;
	}

	.marks {
		fill: none;
		stroke: #fff;
		filter: drop-shadow(1px 1px 0 #666);
	}

	.hud {
		position: absolute;
		top: 32px;
		left: 237px;
		display: flex;
	}

	.hud label,
	.hud input {
		box-sizing: border-box;
		height: 19px;
		border: 1px solid #000;
		background: #fff;
	}

	.hud label {
		width: 17px;
		background: #ddd;
		text-align: center;
		line-height: 16px;
	}

	.hud input {
		width: 79px;
		padding: 0 4px;
	}

	.hud .short {
		width: 74px;
	}

	.mdi {
		position: absolute;
		top: 6px;
		right: 1px;
		display: flex;
		gap: 6px;
	}

	.mdi path {
		fill: none;
		stroke: #fff;
	}

	.view-cube {
		position: absolute;
		top: 60px;
		right: 35px;
		width: 54px;
		height: 54px;
		border: 1px solid #777;
		background: linear-gradient(135deg, #8f97a6, #858c9a);
		box-shadow: 0 4px 1px -1px #33373f;
		color: #5b6372;
		font-size: 12px;
		font-weight: bold;
	}

	.nav-bar {
		position: absolute;
		top: 146px;
		right: 2px;
		display: flex;
		flex-direction: column;
		align-items: center;
		justify-content: space-between;
		box-sizing: border-box;
		width: 33px;
		height: 198px;
		padding: 2px 0;
		border: 1px solid #3a3f4a;
		border-radius: 4px;
		background: #777e8a;
	}

	.nav-bar hr {
		width: 26px;
		margin: 0;
		border: 0;
		border-top: 1px solid #555;
	}

	.dot {
		align-self: flex-end;
		width: 9px;
		height: 9px;
		margin-right: 2px;
		border-radius: 5px;
		background: #4b525f;
		color: #ccc;
		font-size: 9px;
		line-height: 8px;
		text-align: center;
	}

	.doc-tabs {
		display: flex;
		height: 20px;
		margin-right: -2px;
		border-top: 2px solid #666;
		border-bottom: 1px solid #999;
		background: linear-gradient(#dcdcdc, #b4b4b4);
	}

	.arrange {
		width: 20px;
		box-sizing: border-box;
		border: 1px solid #555;
		border-width: 0 1px 1px 0;
		background: #dfe3e4;
	}

	.doc {
		gap: 5px;
		height: 19px;
		box-sizing: border-box;
		padding: 0 9px;
		border: 1px solid #666;
		border-top: 0;
		border-radius: 0 0 4px 4px;
		background: linear-gradient(#c4c4c4, #dedede);
	}

	.current {
		background: #fff;
	}

	.current svg {
		align-self: flex-start;
		margin-top: 2px;
	}

	footer {
		display: flex;
		align-items: center;
		height: 24px;
		background: linear-gradient(#f4f4f4, #d8d8d8 50%, #b2b2b2);
	}

	.hint {
		width: 450px;
		box-sizing: border-box;
		padding-left: 1px;
	}

	.status-tools {
		display: flex;
		align-items: center;
		flex: 1;
		padding-left: 2px;
		border-left: 1px solid #ddd;
	}

	.cell {
		box-sizing: border-box;
		width: 38px;
		padding-left: 8px;
		border-left: 1px solid #e6e6e6;
		line-height: 20px;
		white-space: nowrap;
	}

	.coords {
		width: 134px;
		padding: 0 4px;
	}

	/* command help */
	.tooltip {
		position: absolute;
		top: 85px;
		left: 0;
		box-sizing: border-box;
		width: 340px;
		border: 1px solid #767676;
		background: #f0f1f7;
		color: #555;
	}

	.text {
		padding: 8px 7px 0;
	}

	.text p {
		margin: 6px 0 18px;
	}

	.text p + p {
		margin: 0 0 15px;
	}

	.tooltip text {
		fill: #14b000;
		font-weight: bold;
		font-size: 14px;
	}

	.more {
		margin: 0 1px;
		padding: 7px 6px;
		border-top: 1px solid #bbb;
		font-weight: bold;
	}
</style>
